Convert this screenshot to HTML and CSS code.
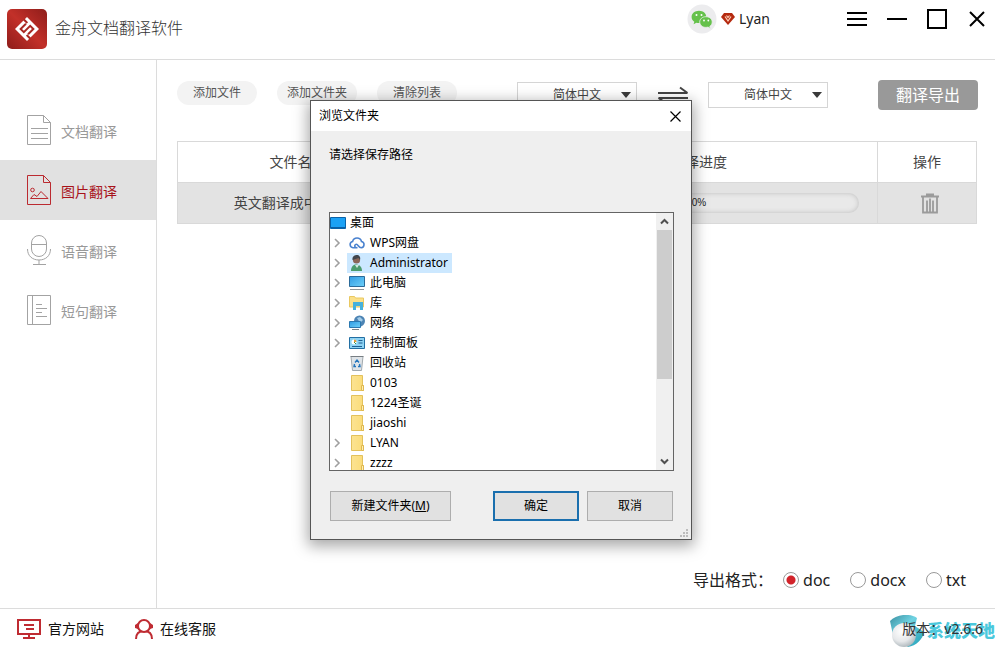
FILE: index.html
```html
<!DOCTYPE html>
<html lang="zh-CN">
<head>
<meta charset="utf-8">
<meta name="viewport" content="width=device-width, initial-scale=1">
<title>金舟文档翻译软件</title>
<link rel="stylesheet" href="styles.css">
</head>
<body>
<svg class="defs" aria-hidden="true">
  <defs>
    <linearGradient id="gLogo" x1="0" y1="1" x2="1" y2="0"><stop offset="0" stop-color="#8e1d1a"/><stop offset=".5" stop-color="#c23029"/><stop offset="1" stop-color="#8e1d1a"/></linearGradient>
    <linearGradient id="gScreen" x1="0" y1="0" x2="1" y2="1"><stop offset="0" stop-color="#2f9be4"/><stop offset="1" stop-color="#6fd0f8"/></linearGradient>
    <linearGradient id="gFolder" x1="0" y1="0" x2="1" y2="0"><stop offset="0" stop-color="#fbe392"/><stop offset="1" stop-color="#fbdc78"/></linearGradient>
    <radialGradient id="gBall" cx=".4" cy=".35" r=".7"><stop offset="0" stop-color="#fff"/><stop offset=".6" stop-color="#e6e8ea"/><stop offset="1" stop-color="#a9b3b8"/></radialGradient>
    <linearGradient id="gWave" x1="0" y1="0" x2="1" y2="1"><stop offset="0" stop-color="#3a8ea0"/><stop offset=".4" stop-color="#6fd3e2"/><stop offset="1" stop-color="#1e9db5"/></linearGradient>
    <symbol id="chev" viewBox="0 0 7 10"><path d="M1 1l4 4-4 4" fill="none" stroke="#a0a0a0" stroke-width="1.6"/></symbol>
    <symbol id="folder" viewBox="0 0 16 16"><path d="M2.500.5h11v10h1v5h-12z" fill="url(#gFolder)" stroke="#e3c15c"/><path d="M12.500 15.500v-5h2v5z" fill="#fdeeb5" stroke="#e0b94f"/></symbol>
  </defs>
</svg>
<header class="top">
  <svg class="logo" viewBox="0 0 40 40" role="img" aria-label="金舟">
    <rect width="40" height="40" rx="5" fill="url(#gLogo)"/>
    <g transform="translate(20 20) rotate(45)">
      <path d="M-8.500-8.500h17v17h-17z" fill="#fff"/>
      <path d="M-4.500-3V4.500H0v-9h4.500V3" fill="none" stroke="#a92923" stroke-width="2"/>
      <path d="M-9-4.500h5M4 4.500h5" fill="none" stroke="#a92923" stroke-width="2"/>
    </g>
  </svg>
  <h1 class="title">金舟文档翻译软件</h1>
  <div class="user">
    <svg class="avatar" viewBox="0 0 30 30" aria-hidden="true">
      <circle cx="15" cy="15" r="14.500" fill="#ececee"/>
      <path d="M12 6.800c-4.300 0-7.400 2.800-7.400 6.200 0 2 1 3.700 2.700 4.800l-.7 2.400 2.800-1.500c.8.200 1.700.3 2.600.3 4.200 0 7.300-2.700 7.300-6S16.300 6.800 12 6.800z" fill="#65c14b"/>
      <path d="M19 12.700c-3.700 0-6.300 2.300-6.300 5.300s2.600 5.400 6.300 5.400c.7 0 1.400-.1 2-.3l2.400 1.300-.6-2.100c1.500-1 2.400-2.500 2.400-4.300 0-3-2.600-5.300-6.200-5.300z" fill="#65c14b" stroke="#ececee" stroke-width=".8"/>
      <g fill="#fff"><circle cx="9.500" cy="11" r="1"/><circle cx="14.500" cy="11" r="1"/><circle cx="17" cy="16.500" r=".9"/><circle cx="21.300" cy="16.500" r=".9"/></g>
    </svg>
    <svg class="gem" viewBox="0 0 14 12" aria-hidden="true"><path d="M3 0h8l3 4-7 8-7-8z" fill="#b52a10"/><path d="M4 3.500L7 8l3-4.500M5.500 2.500L7 4.500l1.500-2" fill="none" stroke="#ffd0b8" stroke-width="1.200"/></svg>
    <span>Lyan</span>
  </div>
  <div class="winctl">
    <button type="button" aria-label="菜单"><svg viewBox="0 0 20 20"><path d="M0 4h20M0 10h20M0 16h20" stroke="#000" stroke-width="2"/></svg></button>
    <button type="button" aria-label="最小化"><svg viewBox="0 0 20 20"><path d="M0 10h20" stroke="#000" stroke-width="2"/></svg></button>
    <button type="button" aria-label="最大化"><svg viewBox="0 0 20 20"><path d="M1 1h18v18H1z" fill="none" stroke="#000" stroke-width="2"/></svg></button>
    <button type="button" aria-label="关闭"><svg viewBox="0 0 20 20"><path d="M3 3l14 14M17 3L3 17" stroke="#000" stroke-width="2"/></svg></button>
  </div>
</header>

<div class="middle">
  <nav class="side">
    <a href="#doc"><svg viewBox="0 0 26 32"><path d="M1.500 1.500h16l7 7v22h-23zM17.500 1.500v7h7M5 14.500h17M5 19.500h17M5 24.500h17"/></svg>文档翻译</a>
    <a href="#pic" class="on" aria-current="page"><svg viewBox="0 0 26 32"><path d="M1.500 1.500h16l7 7v22h-23zM17.500 1.500v7h7M4.500 24.500l3.500-4 3 2 4-5 7 7z"/><circle cx="6.500" cy="16" r="1.800"/></svg>图片翻译</a>
    <a href="#voice"><svg viewBox="0 0 26 32"><rect x="5.500" y="1.500" width="15" height="21" rx="7.500"/><path d="M5.500 10.500h15M1.500 15c0 7 5 11 11.500 11s11.500-4 11.500-11M13 26v4.500M7 30.500h13"/></svg>语音翻译</a>
    <a href="#sentence"><svg viewBox="0 0 26 32"><path d="M1.500 1.500h23v29h-23zM6.500 1.500v29M10 10.500h6M10 14.500h11M10 18.500h6M10 22.500h11"/></svg>短句翻译</a>
  </nav>

  <main class="main">
    <div class="tools">
      <button type="button" class="pill">添加文件</button>
      <button type="button" class="pill">添加文件夹</button>
      <button type="button" class="pill">清除列表</button>
      <div class="langs">
        <span class="pick"><select aria-label="源语言"><option>简体中文</option></select></span>
        <svg class="swap" viewBox="0 0 32 18" aria-hidden="true"><path d="M1 7h29.500M23 1.500L30.500 7M31 12H1.500M9 17l-7.500-5" fill="none" stroke="#444" stroke-width="2"/></svg>
        <span class="pick"><select aria-label="目标语言"><option>简体中文</option></select></span>
      </div>
      <button type="button" class="export">翻译导出</button>
    </div>

    <table class="files">
      <colgroup><col class="c1"><col class="c2"><col class="c3"><col class="c4"></colgroup>
      <thead><tr><th>文件名称</th><th></th><th>翻译进度</th><th>操作</th></tr></thead>
      <tbody><tr>
        <td>英文翻译成中文.png</td><td></td>
        <td><div class="bar">0%</div></td>
        <td><button type="button" class="trash" aria-label="删除"><svg viewBox="0 0 18 21"><path d="M0 3.500h18M5 1.500h8M2 4v15.500h14V4M6 7.500v12M9 5.500v14M12 7.500v12" fill="none" stroke="#9b9b9b" stroke-width="1.800"/></svg></button></td>
      </tr></tbody>
    </table>

    <fieldset class="formats">
      <legend class="sr">导出格式</legend>
      <span class="cap">导出格式：</span>
      <label><input type="radio" name="fmt" checked>doc</label>
      <label><input type="radio" name="fmt">docx</label>
      <label><input type="radio" name="fmt">txt</label>
    </fieldset>
  </main>
</div>

<footer class="foot">
  <a href="#site"><svg viewBox="0 0 24 20"><path d="M1 1h22v14H1zM12 15v4M6 19h12M7 6h10M9 10h8" fill="none" stroke="#bf2b32" stroke-width="2"/></svg>官方网站</a>
  <a href="#service"><svg class="svc" viewBox="0 0 18 20"><path d="M1 20c0-5 3-8 8-8s8 3 8 8" fill="none" stroke="#bf2b32" stroke-width="2"/><circle cx="9" cy="7" r="6" fill="#fff" stroke="#bf2b32" stroke-width="2"/><path d="M0 6l3-2v6L0 9zM18 6l-3-2v6l3-1z" fill="#bf2b32"/></svg>在线客服</a>
  <div class="mark">
    <svg viewBox="0 0 36 32" aria-hidden="true"><path d="M0 6C6-1 20-2 27 3l-2 8 9 6c-1 7-8 14-16 15L3 20z" fill="url(#gWave)"/><circle cx="14" cy="20" r="12" fill="url(#gBall)"/></svg>
    <span>系统天地</span>
  </div>
  <span class="ver">版本：v2.6.6</span>
</footer>

<section class="dlg" role="dialog" aria-labelledby="dlgTitle">
  <div class="dlg-head">
    <h2 id="dlgTitle">浏览文件夹</h2>
    <button type="button" aria-label="关闭"><svg viewBox="0 0 11 11"><path d="M.5.5l10 10M10.500.5l-10 10" stroke="#000" stroke-width="1.200"/></svg></button>
  </div>
  <div class="dlg-body">
    <p>请选择保存路径</p>
    <div class="treebox">
      <ul class="tree">
        <li class="root"><svg class="ic" viewBox="0 0 16 16"><path d="M.5 2.500h15v11H.5z" fill="#1ba1f5" stroke="#0a62a8"/><path d="M1 12.500h14" stroke="#0b5fa5"/></svg><span>桌面</span></li>
        <li><svg class="ch"><use href="#chev"/></svg><svg class="ic" viewBox="0 0 16 16"><path d="M8.500 12.800H4a3.200 3.200 0 01-.4-6.300 4.600 4.600 0 018.900 0 3.200 3.200 0 01-.3 6.300c-2.500 0-3.200-3.600-4.700-3.600a1.700 1.700 0 000 3.400" fill="none" stroke="#4a82cf" stroke-width="1.600"/></svg><span>WPS网盘</span></li>
        <li class="sel"><svg class="ch"><use href="#chev"/></svg><svg class="ic" viewBox="0 0 16 16"><path d="M2 16c0-4 2-6.500 5-6.500s6 2 6 6.500z" fill="#4b9c6d"/><circle cx="7.500" cy="5" r="3.600" fill="#8a6658"/><path d="M3.500 5C3 1 6 0 8 0s4 2 3 5L9.500 3z" fill="#42464d"/><path d="M6 10l2 3 2-3" fill="#d8eadf"/></svg><span>Administrator</span></li>
        <li><svg class="ch"><use href="#chev"/></svg><svg class="ic" viewBox="0 0 16 16"><path d="M.5 1.500h15v10H.5z" fill="url(#gScreen)" stroke="#2b6a99"/><path d="M1 14.500h14" stroke="#8d9499"/></svg><span>此电脑</span></li>
        <li><svg class="ch"><use href="#chev"/></svg><svg class="ic" viewBox="0 0 16 16"><path d="M.5 1.500h5l1 1.500h8v9h-14z" fill="#fbe08a" stroke="#e9c861"/><path d="M4 15V7h10v8h-3v-4H7v4z" fill="#45b1dd"/></svg><span>库</span></li>
        <li><svg class="ch"><use href="#chev"/></svg><svg class="ic" viewBox="0 0 16 16"><circle cx="10.500" cy="6" r="5.500" fill="#4d84b4"/><path d="M8 3l3-1 3 3-3 3z" fill="#a4cce8"/><path d="M.5 6.500h11v6H.5z" fill="url(#gScreen)" stroke="#2b78b0"/><path d="M3 14.500h7" stroke="#7a8288"/></svg><span>网络</span></li>
        <li><svg class="ch"><use href="#chev"/></svg><svg class="ic" viewBox="0 0 16 16"><path d="M.5 2.500h15v11H.5z" fill="#8ed3f4" stroke="#236fa3"/><circle cx="5" cy="7" r="2.500" fill="#fff"/><path d="M5 7V4.500A2.500 2.500 0 017.500 7z" fill="#e39b35"/><path d="M9.500 5.500h4M9.500 8h4M3 11.500h10" stroke="#205f91"/><path d="M5 7l2 2" stroke="#2f9250"/></svg><span>控制面板</span></li>
        <li><i class="ch"></i><svg class="ic" viewBox="0 0 16 16"><path d="M2 1.500h12l-1.500 14h-9z" fill="#dfe4e8" stroke="#a1a8ad"/><path d="M1.500 1.500h13" stroke="#777e83"/><path d="M6 7.500l2-2.500 2 2.500M10.500 9l.5 2.500H9M7 11.500H5L5.500 9" fill="none" stroke="#2476bd" stroke-width="1.400"/></svg><span>回收站</span></li>
        <li><i class="ch"></i><svg class="ic"><use href="#folder"/></svg><span>0103</span></li>
        <li><i class="ch"></i><svg class="ic"><use href="#folder"/></svg><span>1224圣诞</span></li>
        <li><i class="ch"></i><svg class="ic"><use href="#folder"/></svg><span>jiaoshi</span></li>
        <li><svg class="ch"><use href="#chev"/></svg><svg class="ic"><use href="#folder"/></svg><span>LYAN</span></li>
        <li><svg class="ch"><use href="#chev"/></svg><svg class="ic"><use href="#folder"/></svg><span>zzzz</span></li>
      </ul>
      <div class="scroll" aria-hidden="true">
        <svg viewBox="0 0 17 17"><path d="M5 10.500l3.500-3.500 3.500 3.500" fill="none" stroke="#505050" stroke-width="2"/></svg>
        <div class="thumb"></div>
        <svg viewBox="0 0 17 17"><path d="M5 6.500l3.500 3.500L12 6.500" fill="none" stroke="#505050" stroke-width="2"/></svg>
      </div>
    </div>
    <div class="acts">
      <button type="button" class="new">新建文件夹(<u>M</u>)</button>
      <button type="button" class="ok">确定</button>
      <button type="button">取消</button>
    </div>
  </div>
  <svg class="grip" viewBox="0 0 9 9" aria-hidden="true"><path d="M6 0h2v2H6zM3 3h2v2H3zM6 3h2v2H6zM0 6h2v2H0zM3 6h2v2H3zM6 6h2v2H6z" fill="#bdbdbd"/></svg>
</section>
</body>
</html>
```
FILE: styles.css
```css
* { box-sizing: border-box; }
body {
  margin: 0;
  min-height: 100vh;
  display: flex;
  flex-direction: column;
  position: relative;
  background: #fff;
  color: #333;
  font: 14px/20px "Noto Sans", "Noto Sans CJK SC", sans-serif;
}
button, select, input { font: inherit; color: inherit; }
button { padding: 0; border: 0; background: none; }
a { color: inherit; text-decoration: none; }
svg { display: block; flex: none; }
.defs { position: absolute; width: 0; height: 0; }
.sr { position: absolute; width: 1px; height: 1px; overflow: hidden; clip-path: inset(50%); }

.top {
  display: flex;
  align-items: flex-start;
  height: 60px;
  padding: 0 8px 0 7px;
  border-bottom: 1px solid #dcdcdc;
}
.logo { width: 40px; height: 40px; margin-top: 9px; }
.title { margin: 18px 0 0 8px; font-size: 16px; font-weight: 300; color: #333; }
.user { display: flex; align-items: center; gap: 4px; height: 38px; margin-left: auto; color: #222; }
.avatar { width: 30px; height: 30px; }
.gem { width: 14px; height: 12px; }
.winctl { display: flex; align-items: center; gap: 20px; height: 38px; margin-left: 77px; }
.winctl svg { width: 20px; height: 20px; }

.middle { flex: 1; display: flex; }
.side { flex: none; width: 157px; padding-top: 40px; border-right: 1px solid #dcdcdc; color: #999; }
.side a { display: flex; align-items: center; gap: 9px; height: 60px; padding-left: 26px; padding-top: 4px; }
.side svg { width: 26px; height: 32px; margin-top: -4px; fill: none; stroke: #a3a3a3; }
.side .on { background: #e1e1e1; color: #a8121a; }
.side .on svg { stroke: #bb2a30; }

.main { flex: 1; min-width: 0; display: flex; flex-direction: column; padding: 20px 18px 16px 20px; }
.tools { display: flex; gap: 20px; height: 30px; margin-right: -1px; font-size: 12px; }
.pill { width: 80px; height: 24px; margin-top: 1px; border-radius: 12px; background: #f3f3f3; color: #555; }
.langs { display: flex; align-items: center; margin-left: auto; }
.pick { position: relative; }
.pick::after {
  content: "";
  position: absolute;
  right: 6px;
  top: 10px;
  border: 5px solid transparent;
  border-top: 6px solid #3a3a3a;
  border-bottom: 0;
  pointer-events: none;
}
.pick select {
  display: block;
  appearance: none;
  width: 120px;
  height: 26px;
  padding: 0 0 0 35px;
  border: 1px solid #d5d5d5;
  border-radius: 0;
  background: #fff;
  color: #444;
}
.swap { width: 32px; height: 18px; margin: 0 19px 0 20px; }
.export { width: 100px; height: 30px; margin-left: 30px; border-radius: 4px; background: #999; color: #fff; font-size: 16px; }

.files { width: 100%; margin-top: 31px; border-collapse: collapse; table-layout: fixed; border: 1px solid #d9d9d9; text-align: center; color: #444; }
.c1 { width: 30%; }
.c2 { width: 13%; }
.c4 { width: 99px; }
.files tr { height: 41px; }
.files th, .files td { padding: 0; font-weight: 400; }
.files tr > :last-child { border-left: 1px solid #d9d9d9; }
.files tbody { background: #e3e3e3; border-top: 1px solid #d9d9d9; }
.bar { height: 20px; margin: 0 18px; border-radius: 10px; background: #e9e9e9; box-shadow: inset 0 0 5px #bdbdbd; font: 10px/20px "Liberation Sans", sans-serif; color: #222; }
.trash { vertical-align: middle; margin-left: 6px; }
.trash svg { width: 18px; height: 21px; }

.formats { display: flex; align-items: center; gap: 20px; margin: auto 11px 0 auto; padding: 0; border: 0; font-size: 16px; line-height: 24px; color: #222; }
.formats label { display: flex; align-items: center; gap: 4px; }
.cap { margin-right: -10px; }
.formats input { appearance: none; width: 16px; height: 16px; margin: 0; border: 1px solid #999; border-radius: 50%; background: #fff; }
.formats input:checked { background: radial-gradient(circle, #d2232a 4px, #fff 5px); }

.foot { display: flex; align-items: center; gap: 31px; height: 39px; padding: 2px 12px 0 17px; border-top: 1px solid #dcdcdc; color: #111; position: relative; }
.foot a { display: flex; align-items: center; gap: 7px; }
.foot a svg { width: 24px; height: 20px; }
.foot a .svc { width: 18px; }
.ver { position: relative; margin-left: auto; color: #333; }
.mark { position: absolute; right: 0; bottom: 0; display: flex; align-items: center; gap: 1px; color: #4bc8dc; font-size: 17px; font-weight: 900; white-space: nowrap; }
.mark svg { width: 36px; height: 32px; }

.dlg {
  position: absolute;
  left: 310px;
  top: 100px;
  width: 382px;
  border: 1px solid #555;
  background: #efefef;
  box-shadow: 0 4px 14px 2px rgba(0, 0, 0, .35);
  color: #000;
  font-size: 12px;
}
.dlg-head { display: flex; align-items: center; justify-content: space-between; height: 30px; padding: 0 10px 0 8px; background: #fff; }
.dlg-head h2 { margin: 0; font-size: 12px; font-weight: 400; }
.dlg-head svg { width: 11px; height: 11px; }
.dlg-body { padding: 14px 17px 18px 18px; }
.dlg-body p { margin: 0 0 47px; }
.treebox { display: flex; height: 259px; border: 1px solid #646464; background: #fff; }
.tree { flex: 1; margin: 0; padding: 0; list-style: none; overflow: hidden; }
.tree li { display: flex; align-items: center; height: 20px; }
.ch { width: 7px; height: 10px; margin: 0 6px 0 4px; flex: none; }
.ic { width: 20px; height: 16px; padding: 0 2px; }
.tree .root .ic { padding: 0; width: 16px; margin-right: 1px; }
.tree span { padding: 0 4px 0 3px; }
.sel .ic, .sel span { background: #cce8ff; height: 20px; }
.scroll { flex: none; display: flex; flex-direction: column; width: 17px; background: #f0f0f0; }
.scroll svg { width: 17px; height: 17px; }
.scroll svg:last-child { margin-top: auto; }
.thumb { height: 149px; background: #cdcdcd; margin: 0 1px; }
.acts { display: flex; gap: 8px; margin: 20px 1px 0; }
.acts button { width: 86px; height: 30px; border: 1px solid #adadad; background: #e1e1e1; }
.acts .new { width: 121px; margin-right: auto; }
.acts .ok { border: 2px solid #1a6fae; }
.grip { position: absolute; right: 2px; bottom: 1px; width: 9px; height: 9px; }
```
